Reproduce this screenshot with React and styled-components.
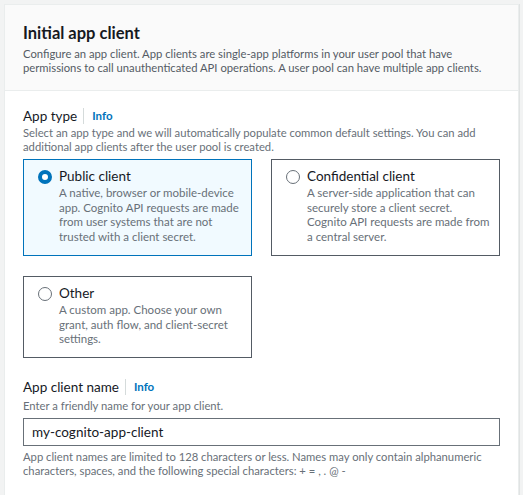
import styled, { createGlobalStyle } from "styled-components";

const GlobalStyle = createGlobalStyle`
  html, body {
    margin: 0;
    padding: 0;
    background: #f2f3f3;
    font-family: Lato, "Noto Sans", sans-serif;
    color: #16191f;
  }
`;

const Page = styled.div`
  padding: 4px 4px 0 4px;
`;

const Container = styled.section`
  background: #ffffff;
  border: 1px solid #eaeded;
  box-shadow: 1px 0 0 #e0e3e3;
`;

const Header = styled.header`
  background: #fafafa;
  border-bottom: 1px solid #eaeded;
  padding: 16px 18px 15px 18px;
`;

const Title = styled.h2`
  margin: 0;
  font-size: 16.5px;
  font-weight: 700;
  line-height: 24px;
  color: #16191f;
`;

const HeaderText = styled.p`
  margin: 2px 0 0;
  font-size: 11.25px;
  line-height: 14px;
  color: #545b64;
`;

const Body = styled.div`
  padding: 15px 18px 20px;
  display: flex;
  flex-direction: column;
  gap: 19px;
`;

const Field = styled.div`
  display: flex;
  flex-direction: column;
`;

const LabelRow = styled.div`
  display: flex;
  align-items: center;
  font-size: 13.5px;
  line-height: 20px;
  color: #16191f;
`;

const InfoLink = styled.a`
  margin-left: 6px;
  padding-left: 8px;
  border-left: 1px solid #d5dbdb;
  font-size: 11.5px;
  line-height: 16px;
  font-weight: 700;
  color: #0073bb;
  text-decoration: none;
`;

const Hint = styled.p`
  margin: ${(p) => p.$top || 0}px 0 0;
  font-size: 11.25px;
  line-height: 14px;
  color: #687078;
`;

const Tiles = styled.div`
  margin-top: 5px;
  display: grid;
  grid-template-columns: 1fr 1fr;
  column-gap: 19px;
  row-gap: 20px;
`;

const Tile = styled.label`
  display: flex;
  gap: 7px;
  padding: 6px 6px 10px 14px;
  border: 1px solid ${(p) => (p.$checked ? "#0073bb" : "#545b64")};
  background: ${(p) => (p.$checked ? "#f1faff" : "#ffffff")};
  cursor: pointer;
`;

const Radio = styled.span`
  flex: none;
  box-sizing: border-box;
  width: 14px;
  height: 14px;
  margin-top: 4px;
  border-radius: 50%;
  border: ${(p) => (p.$checked ? "4px solid #0073bb" : "1px solid #687078")};
  background: #ffffff;
`;

const TileText = styled.div`
  display: flex;
  flex-direction: column;
`;

const TileTitle = styled.span`
  font-size: 13.5px;
  line-height: 20px;
  color: #16191f;
`;

const TileDesc = styled.span`
  font-size: 11.5px;
  line-height: 14.7px;
  color: #687078;
`;

const Input = styled.input`
  margin-top: 5px;
  box-sizing: border-box;
  width: 100%;
  height: 28px;
  padding: 0 8px;
  border: 1px solid #687078;
  font-family: inherit;
  font-size: 13.5px;
  color: #16191f;
  background: #ffffff;
  outline: none;
`;

const tiles = [
  {
    title: "Public client",
    desc: "A native, browser or mobile-device app. Cognito API requests are made from user systems that are not trusted with a client secret.",
    checked: true,
  },
  {
    title: "Confidential client",
    desc: "A server-side application that can securely store a client secret. Cognito API requests are made from a central server.",
  },
  {
    title: "Other",
    desc: "A custom app. Choose your own grant, auth flow, and client-secret settings.",
  },
];

export default function App() {
  return (
    <Page>
      <GlobalStyle />
      <Container>
        <Header>
          <Title>Initial app client</Title>
          <HeaderText>
            Configure an app client. App clients are single-app platforms in your user pool that have
            permissions to call unauthenticated API operations. A user pool can have multiple app clients.
          </HeaderText>
        </Header>
        <Body>
          <Field>
            <LabelRow>
              App type <InfoLink href="#">Info</InfoLink>
            </LabelRow>
            <Hint>
              Select an app type and we will automatically populate common default settings. You can add
              additional app clients after the user pool is created.
            </Hint>
            <Tiles>
              {tiles.map((t) => (
                <Tile key={t.title} $checked={t.checked}>
                  <Radio $checked={t.checked} />
                  <TileText>
                    <TileTitle>{t.title}</TileTitle>
                    <TileDesc>{t.desc}</TileDesc>
                  </TileText>
                </Tile>
              ))}
            </Tiles>
          </Field>
          <Field>
            <LabelRow>
              App client name <InfoLink href="#">Info</InfoLink>
            </LabelRow>
            <Hint $top={2}>Enter a friendly name for your app client.</Hint>
            <Input defaultValue="my-cognito-app-client" />
            <Hint $top={4}>
              App client names are limited to 128 characters or less. Names may only contain alphanumeric
              characters, spaces, and the following special characters: + = , . @ -
            </Hint>
          </Field>
        </Body>
      </Container>
    </Page>
  );
}
